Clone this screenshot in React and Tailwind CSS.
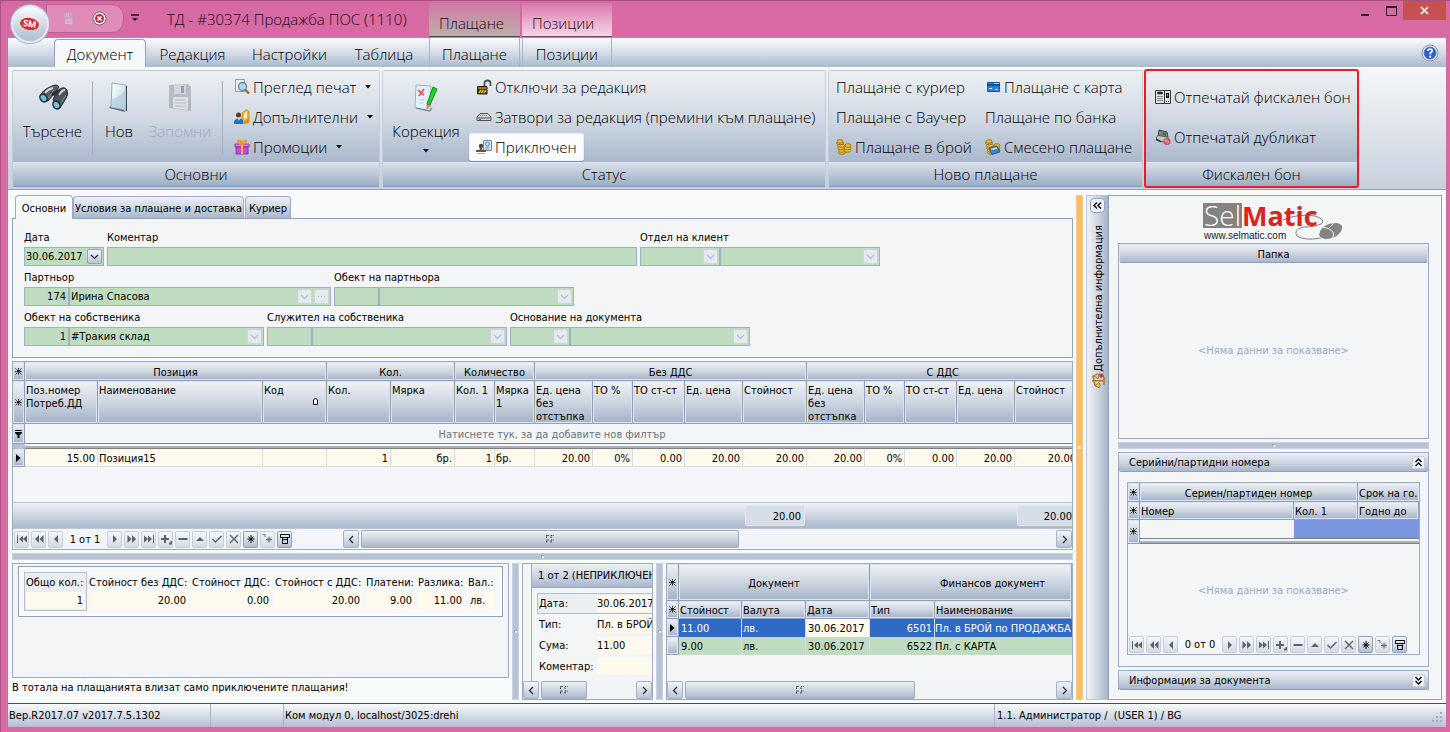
import React, { useId } from "react";

const HEAD =
  "bg-linear-to-b from-[#f1f3f6] via-[#ced6e1] to-[#a4b2c8] border-r border-b border-[#8ea1be] shadow-[inset_0_0_0_1px_#dde3ec] font-normal overflow-hidden";
const BAR = "bg-linear-to-b from-[#eef1f5] via-[#ced6e1] to-[#a9b6cb]";
const LINE = "border-[#9aacc6]";

/* ---------- icons ---------- */
const Svg = ({ size = 16, children, className = "" }) => (
  <svg width={size} height={size} viewBox={`0 0 ${size} ${size}`} className={`shrink-0 ${className}`} aria-hidden="true">
    {children}
  </svg>
);

const Binoculars = () => (
  <Svg size={32}>
    <path d="M3 16 Q5 9 13 6 Q20 2 22 6 L17 13 L11 20 Z" fill="#596169" stroke="#23282c" />
    <path d="M16 19 L20 10 Q27 4 30 9 Q32 14 28 19 L23 27 Z" fill="#4d555c" stroke="#23282c" />
    <path d="M13 11 L24 9 L22 14 L15 15 Z" fill="#2c3236" />
    <path d="M8 12 Q11 8 16 7 M22 14 Q25 9 28 9" stroke="#d2d9de" strokeWidth="1.800" fill="none" />
    <path d="M11 17 L17 9 M24 22 L29 14" stroke="#878f96" />
    <ellipse cx="6.500" cy="17" rx="4" ry="5" transform="rotate(-35 6.500 17)" fill="#23282c" />
    <ellipse cx="6.500" cy="17" rx="2.500" ry="3.500" transform="rotate(-35 6.500 17)" fill="#6cc3e0" />
    <ellipse cx="19.500" cy="24" rx="4" ry="5" transform="rotate(-35 19.500 24)" fill="#23282c" />
    <ellipse cx="19.500" cy="24" rx="2.500" ry="3.500" transform="rotate(-35 19.500 24)" fill="#6cc3e0" />
  </Svg>
);
const NewDoc = () => (
  <Svg size={32}>
    <defs>
      <linearGradient id="nd" x1="0" y1="0" x2="1" y2="1">
        <stop offset="0" stopColor="#fff" />
        <stop offset="1" stopColor="#b9d4e2" />
      </linearGradient>
    </defs>
    <path d="M6 27 L22 31 L20 26 L8 24 Z" fill="#69727b" />
    <path d="M9 2 L23 4 V29 L8 26 Z" fill="url(#nd)" stroke="#8fb0c6" />
    <path d="M9 18 Q17 16 22 9 V28 L9 25 Z" fill="#a8c6d4" opacity=".55" />
    <path d="M23.500 5 V30" stroke="#3d4a55" />
  </Svg>
);
const Floppy = ({ size = 32 }) => (
  <svg width={size} height={size} viewBox="0 0 32 32" className="shrink-0" aria-hidden="true">
    <path d="M5 4 L24 3 L27 6 V30 L5 27 Z" fill="#a9b0ba" opacity=".8" />
    <path d="M10 4 H22 V13 H10 Z" fill="#d3d8df" />
    <path d="M17 5 H20 V12 H17 Z" fill="#9aa2ad" />
    <path d="M9 16 H24 V29 L9 27 Z" fill="#dde1e7" />
    <path d="M11 19 H22 M11 22 H22 M11 25 H22" stroke="#b4bbc6" />
  </svg>
);
const EditDoc = () => (
  <Svg size={32}>
    <path d="M6 4 L21 5 L20 30 L5 27 Z" fill="#e4f1fa" stroke="#8fb9d4" />
    <path d="M6 27 L20 30 L22 27" fill="none" stroke="#5d7382" />
    <path d="M8 9 L14 14 M14 8 L9 15" stroke="#f0555a" strokeWidth="2" />
    <path d="M9 19 H15 M9 22 H14" stroke="#b4cfe0" />
    <path d="M23 6 L27 8 L20 24 L17 23 Z" fill="#21d32b" stroke="#0d8f1a" />
    <path d="M17 23 L20 24 L17 28 Z" fill="#e3a64e" stroke="#8a5a1c" strokeWidth=".6" />
  </Svg>
);
const PreviewIcon = () => (
  <Svg>
    <path d="M1.500 .5 H10.500 V12.500 H1.500 Z" fill="#e5f2fb" stroke="#7ea5c4" />
    <circle cx="8.500" cy="7.500" r="4" fill="#a9dbf5" stroke="#6c7f8e" strokeWidth="1.300" />
    <path d="M11 10.500 L15 14.500" stroke="#9a6b2a" strokeWidth="2.400" />
  </Svg>
);
const ExtraIcon = () => (
  <Svg>
    <path d="M8 4 L13 .5 L15 3 V13 L8 14 Z" fill="#f3b23c" stroke="#b8781a" strokeWidth=".7" />
    <path d="M10 4 L13 2.500 V9 L10 11 Z" fill="#ffe9b5" />
    <circle cx="4.500" cy="6" r="2.500" fill="#5b3f2c" />
    <path d="M0 15 V12 Q4 7 9 11 V15 Z" fill="#2f6fb5" />
    <path d="M4 9 L5 12 L6 9 Z" fill="#fff" />
    <path d="M9 13 L15 9 V14 L10 15 Z" fill="#d48b28" />
  </Svg>
);
const GiftIcon = () => (
  <Svg>
    <path d="M1 5 H15 V8 H1 Z" fill="#e07be8" stroke="#7e2a92" strokeWidth=".8" />
    <path d="M2 8 H14 V15 H2 Z" fill="#c44fd6" stroke="#7e2a92" strokeWidth=".8" />
    <path d="M7 5 H9 V15 H7 Z" fill="#ffb03b" />
    <path d="M8 5 Q3 4 4 1.500 Q7 1 8 5 Q9 1 12 1.500 Q13 4 8 5" fill="none" stroke="#f5941d" strokeWidth="1.600" />
  </Svg>
);
const UnlockIcon = () => (
  <Svg>
    <path d="M8.500 8 V4 Q8.500 1.500 11.500 1.500 Q14.500 1.500 14.500 4 V7" fill="none" stroke="#4e5358" strokeWidth="1.800" />
    <path d="M1.500 7.500 H11 V15 H1.500 Z" fill="#3b3226" stroke="#26221c" />
    <path d="M3 14 L5 11 M5.500 14 L7.500 11 M8 14 L10 11" stroke="#e7b52c" strokeWidth="1.500" />
    <path d="M2 9 H10.500" stroke="#d7a640" strokeWidth="1.200" />
  </Svg>
);
const DeviceIcon = () => (
  <Svg>
    <path d="M4 4.500 H12 L15 8 V11.500 H1 V8 Z" fill="#d4d7db" stroke="#4d5257" strokeLinejoin="round" />
    <path d="M1.500 9 H14.500" stroke="#4d5257" />
    <path d="M4 6.500 H12" stroke="#72787e" strokeDasharray="1 1" />
    <path d="M3 10.500 H5" stroke="#c44" />
  </Svg>
);
const StampIcon = () => (
  <Svg>
    <path d="M7.500 1.500 H15.500 V11.500 H7.500 Z" fill="#dceaf6" stroke="#5f8fb8" />
    <path d="M9 8.500 H14 M9 10 H13" stroke="#8ba8c0" />
    <circle cx="11.500" cy="5" r="2" fill="none" stroke="#4a7eb0" />
    <circle cx="5" cy="7" r="2.200" fill="#4a423c" />
    <path d="M4 8 H6 L6.500 11 H10 V13 H0 V11 H3.500 Z" fill="#6b5446" />
    <path d="M1 14.500 H9" stroke="#c8a68e" />
  </Svg>
);
const CoinsIcon = ({ blue }) => (
  <Svg>
    <g fill="#f0be35" stroke="#8f6508" strokeWidth=".8">
      <ellipse cx="6" cy="13.500" rx="3.500" ry="1.800" />
      <ellipse cx="6" cy="11.500" rx="3.500" ry="1.800" />
      <ellipse cx="5" cy="9" rx="3.500" ry="1.800" />
      <ellipse cx="5" cy="6.500" rx="3.500" ry="1.800" />
      <ellipse cx="4" cy="4" rx="3.500" ry="1.800" />
      <ellipse cx="4" cy="2.500" rx="3" ry="1.800" />
      <ellipse cx="11.500" cy="11.500" rx="3.500" ry="1.800" />
      <ellipse cx="11.500" cy="9" rx="3.500" ry="1.800" />
      <ellipse cx="12" cy="6.500" rx="3" ry="1.800" />
    </g>
    {blue && (
      <g>
        <path d="M4 9 L12 7 L15 13 L7 15.500 Z" fill="#3c83cc" stroke="#1c4f8e" strokeWidth=".8" />
        <path d="M6 10.500 L12 9" stroke="#cfe4f7" strokeWidth="1.500" />
      </g>
    )}
  </Svg>
);
const CardIcon = () => (
  <Svg>
    <path d="M2.500 3.500 H14.500 V12.500 H2.500 Z" fill="#2a7fd4" stroke="#1d5a9c" />
    <path d="M2 6 H15" stroke="#0f4280" strokeWidth="1.500" />
    <path d="M4 9.500 H7 M10 10.500 H13" stroke="#d8ecff" />
    <path d="M9 4.500 H14" stroke="#f3d05a" />
  </Svg>
);
const FiscalIcon = () => (
  <Svg>
    <path d="M.5 1.500 H15.500 V14.500 H.5 Z" fill="#dfe3e0" stroke="#3a3f3c" />
    <path d="M2.500 3 H7.500 V5 H2.500 Z" fill="#173a20" stroke="#222" strokeWidth=".5" />
    <path d="M2.500 7.500 H8 M2.500 9.500 H8 M2.500 11.500 H8" stroke="#333" strokeDasharray="1 1" />
    <path d="M9.500 2 V14" stroke="#333" />
    <path d="M11 4 H14 V9 H11 Z" fill="#111" />
    <path d="M12.500 5 V7.500" stroke="#35d14d" />
    <path d="M11 12.500 H14" stroke="#444" strokeDasharray="1 1" />
  </Svg>
);
const DuplicateIcon = () => (
  <Svg>
    <path d="M4 1 L12 3 L13 8 L3 7 Z" fill="#7d8681" stroke="#3d433f" />
    <path d="M8 3.500 L11 4.500 L11 6.500 L8 6 Z" fill="#1d7a3d" />
    <path d="M1 9 L3 6.500 L13 8 L12 13 L5 12.500 Z" fill="#c6cbc8" stroke="#535a56" />
    <path d="M1 10.500 L6 12.500" stroke="#35393a" strokeWidth="1.500" />
    <circle cx="12" cy="12.500" r="2.700" fill="#fff" stroke="#dd3c48" strokeWidth="1.500" />
    <path d="M10.500 14.500 L14 10.500" stroke="#dd3c48" strokeWidth="1.300" />
  </Svg>
);
const HelpIcon = () => (
  <svg width="18" height="18" viewBox="0 0 18 18" aria-hidden="true">
    <circle cx="9" cy="9" r="8" fill="#e8ecf3" stroke="#8793a8" />
    <circle cx="9" cy="9" r="6" fill="#2f5fcb" stroke="#4a78dd" />
    <path d="M7 7 Q7 5 9 5 Q11.500 5 11 7.300 Q10.500 8.300 9.300 9 V10.500" fill="none" stroke="#fff" strokeWidth="1.700" />
    <circle cx="9.200" cy="12.600" r="1.100" fill="#fff" />
  </svg>
);
const ScaleIcon = () => (
  <Svg>
    <path d="M8 2 V13 M3 5 L13 3 M4 14 H12" stroke="#b07a18" strokeWidth="1.600" fill="none" />
    <path d="M1 9 L3 5 L6 9 Q3.500 11.500 1 9 Z M10 8 L13 3.500 L15 8 Q12.500 10 10 8 Z" fill="#f2c657" stroke="#8f6410" strokeWidth=".8" />
    <path d="M11 10 L15 9 V13 L12 14 Z" fill="#c23a3a" />
  </Svg>
);
const Star = () => (
  <svg width="9" height="9" viewBox="0 0 9 9" className="mx-auto block" aria-hidden="true">
    <path d="M4.500 1 V8 M1 4.500 H8" stroke="#000" strokeDasharray="1.200 .5" />
    <path d="M1.500 1.500 L7.500 7.500 M7.500 1.500 L1.500 7.500" stroke="#000" strokeDasharray="1.500 .5" />
  </svg>
);
const FilterMark = () => (
  <svg width="9" height="10" viewBox="0 0 9 10" className="mx-auto block" aria-hidden="true">
    <path d="M1 1.500 H8" stroke="#000" />
    <path d="M1 3 H8 V4 L6 6 H3 L1 4 Z" fill="#000" />
    <path d="M3.500 5 V9 H5.500 V5 Z" fill="#000" />
  </svg>
);
const RowArrow = () => (
  <svg width="5" height="8" viewBox="0 0 5 8" className="mx-auto block" aria-hidden="true">
    <path d="M0 0 L4.500 4 L0 8 Z" fill="#000" />
  </svg>
);
const Chevron = ({ dir = "down", dim }) => {
  const d = { down: "M2 4 L5.500 7.500 L9 4", left: "M7 2 L3.500 5.500 L7 9", right: "M4 2 L7.500 5.500 L4 9" }[dir];
  return (
    <svg width="11" height="11" viewBox="0 0 11 11" className="mx-auto block" aria-hidden="true">
      <path d={d} fill="none" stroke={dim ? "#b4bdcc" : "#1f2227"} strokeWidth="1.200" />
    </svg>
  );
};
const DoubleChevron = ({ dir }) => {
  const d = {
    up: "M2.500 5 L5.500 2 L8.500 5 M2.500 9 L5.500 6 L8.500 9",
    down: "M2.500 2 L5.500 5 L8.500 2 M2.500 6 L5.500 9 L8.500 6",
    left: "M5 2.500 L2 5.500 L5 8.500 M9 2.500 L6 5.500 L9 8.500",
  }[dir];
  return (
    <svg width="11" height="11" viewBox="0 0 11 11" className="shrink-0" aria-hidden="true">
      <path d={d} fill="none" stroke="#111" strokeWidth="1.500" />
    </svg>
  );
};
const Caret = () => (
  <svg width="6" height="4" viewBox="0 0 6 4" className="block shrink-0" aria-hidden="true">
    <path d="M0 0 H6 L3 3.500 Z" fill="#111" />
  </svg>
);

const NAV_ICONS = {
  first: <path d="M1 2 H2 V10 H1 Z M7 2.500 V9.500 L3 6 Z M11 2.500 V9.500 L7 6 Z" fill="#5f6368" />,
  prevPage: <path d="M6 2 L2 6 L6 10 Z M10.500 2 L6.500 6 L10.500 10 Z" fill="#5f6368" />,
  prev: <path d="M8 2 L4 6 L8 10 Z" fill="#5f6368" />,
  next: <path d="M4 2 L8 6 L4 10 Z" fill="#5f6368" />,
  nextPage: <path d="M1.500 2 L5.500 6 L1.500 10 Z M6 2 L10 6 L6 10 Z" fill="#5f6368" />,
  last: <path d="M1 2.500 L5 6 L1 9.500 Z M5 2.500 L9 6 L5 9.500 Z M10 2 H11 V10 H10 Z" fill="#5f6368" />,
  add: <path d="M5 2 V10 M1 6 H9 M9 10.500 H11.500 V8" stroke="#5f6368" strokeWidth="2" fill="none" />,
  del: <path d="M1.500 6 H10.500" stroke="#5f6368" strokeWidth="2" />,
  edit: <path d="M2 8 L6 4 L10 8 Z" fill="#5f6368" />,
  post: <path d="M1.500 6 L4.500 9 L10.500 3" stroke="#5f6368" strokeWidth="1.500" fill="none" />,
  cancel: <path d="M2 2 L10 10 M10 2 L2 10" stroke="#5f6368" strokeWidth="1.400" />,
  star: <path d="M6 2 V10 M2.500 6 H9.500 M3.500 3.500 L8.500 8.500 M8.500 3.500 L3.500 8.500" stroke="#000" />,
  goto: <path d="M.5 1.500 H3 V4 M7 3.500 V9.500 M4 6.500 H10 M5 4.500 L9 8.500 M9 4.500 L5 8.500" stroke="#5f6368" strokeWidth=".9" fill="none" />,
  filter: <path d="M1.500 1.500 H10.500 V4.500 H1.500 Z M3.500 4.500 V10.500 H8.500 V4.500 M3.500 6.500 H8.500" stroke="#000" fill="none" />,
};
const NavButton = ({ name, label, strong }) => (
  <button
    type="button"
    aria-label={label}
    className={`flex h-[17px] w-[15px] items-center justify-center rounded-xs border bg-linear-to-b from-[#f6f8fa] ${
      strong ? "border-[#8c9fbd] to-[#b3c0d3]" : "border-[#c4cedd] to-[#d4dbe6]"
    }`}
  >
    <svg width="12" height="12" viewBox="0 0 12 12" className="shrink-0" aria-hidden="true">
      {NAV_ICONS[name]}
    </svg>
  </button>
);
const Navigator = ({ text }) => (
  <div className="flex items-center gap-[2px] px-px">
    <NavButton name="first" label="Първи" />
    <NavButton name="prevPage" label="Предишна страница" />
    <NavButton name="prev" label="Предишен" />
    <span className="w-[40px] text-center whitespace-nowrap">{text}</span>
    <NavButton name="next" label="Следващ" />
    <NavButton name="nextPage" label="Следваща страница" />
    <NavButton name="last" label="Последен" />
    <NavButton name="add" label="Добави" />
    <NavButton name="del" label="Изтрий" />
    <NavButton name="edit" label="Редактирай" />
    <NavButton name="post" label="Запиши" />
    <NavButton name="cancel" label="Отказ" />
    <NavButton name="star" label="Отметка" strong />
    <NavButton name="goto" label="Към отметка" />
    <NavButton name="filter" label="Филтър" strong />
  </div>
);

const ScrollBar = ({ thumb, className = "" }) => (
  <div className={`flex h-[18px] items-stretch gap-[2px] bg-[#f1f3f6] ${className}`}>
    <button type="button" aria-label="Наляво" className="w-4 rounded-xs border border-[#a5b3c9] bg-linear-to-b from-[#f4f6f9] to-[#b9c5d7]">
      <Chevron dir="left" />
    </button>
    <div className="flex flex-1">
      <div className={`flex items-center justify-center rounded-xs border border-[#9aabc4] ${BAR} ${thumb}`}>
        <svg width="8" height="8" viewBox="0 0 8 8" aria-hidden="true">
          <path d="M.5 3 V.5 H3 M5 3 V.5 H7.500 M.5 7.500 V5 H3 M5 7.500 V5 H7.500" fill="none" stroke="#1b1f26" strokeDasharray="1.500 .7" />
        </svg>
      </div>
    </div>
    <button type="button" aria-label="Надясно" className="w-4 rounded-xs border border-[#a5b3c9] bg-linear-to-b from-[#f4f6f9] to-[#b9c5d7]">
      <Chevron dir="right" />
    </button>
  </div>
);

/* ---------- ribbon ---------- */
const RibbonGroup = ({ title, className = "", children }) => (
  <section className={`flex h-[117px] shrink-0 flex-col rounded-xs border border-[#c3cddb] border-b-[#8499b8] ${className}`}>
    <div className="flex flex-1 bg-linear-to-b from-[#edf0f3] via-[#d3dae4] to-[#aab8cd] pt-[2px]">{children}</div>
    <h2 className="flex h-[24px] items-center justify-center border-t border-[#dfe5ed] bg-linear-to-b from-[#d9dfe8] to-[#9cadc5] pb-px text-[15px] leading-5">
      {title}
    </h2>
  </section>
);
const BigButton = ({ icon, label, className = "", caret, disabled }) => (
  <button type="button" disabled={disabled} className={`flex h-[86px] shrink-0 flex-col items-center pt-2 disabled:text-[#9aabc5] ${className}`}>
    {icon}
    <span className="mt-2 leading-5">{label}</span>
    {caret && <span className="mt-2"><Caret /></span>}
  </button>
);
const SmallButton = ({ icon, label, caret, active }) => (
  <button
    type="button"
    className={`flex h-7 items-center gap-[3px] self-start rounded-xs border px-[6px] whitespace-nowrap ${
      active ? "border-[#e9edf2] bg-[#fbfcfd] shadow-[0_1px_1px_#7d8ea9]" : "border-transparent"
    }`}
  >
    {icon}
    <span>{label}</span>
    {caret && <span className="ml-[6px]"><Caret /></span>}
  </button>
);
const Separator = () => <div className="mt-2 h-[74px] w-px shrink-0 bg-[#9fb2cb]" />;

/* ---------- form ---------- */
const FieldButton = ({ dim = true, dots }) => (
  <button
    type="button"
    aria-label={dots ? "Още" : "Отвори списък"}
    className={`flex h-[15px] w-[15px] shrink-0 items-center justify-center rounded-xs border ${
      dim ? "border-[#cbd5df] bg-[#e6eaf0]" : "border-[#8fa2be] bg-linear-to-b from-[#f5f7fa] to-[#b9c5d7]"
    }`}
  >
    {dots ? (
      <svg width="9" height="3" viewBox="0 0 9 3" aria-hidden="true">
        <path d="M1 1.500 H8" stroke="#a9b4c6" strokeDasharray="1 2" />
      </svg>
    ) : (
      <Chevron dim={dim} />
    )}
  </button>
);
const Box = ({ id, label, value = "", w, right, button, dots, strong }) => (
  <div className={`flex h-[19px] items-center gap-[2px] border border-[#9db0c4] bg-[#c0dcc0] pr-px ${w}`}>
    <input
      id={id}
      aria-label={label}
      defaultValue={value}
      className={`h-full min-w-0 flex-1 bg-transparent px-px outline-none ${right ? "text-right" : ""}`}
    />
    {button && <FieldButton dim={!strong} />}
    {dots && <FieldButton dots />}
  </div>
);
const Field = ({ label, boxes }) => {
  const id = useId();
  return (
    <div className="flex flex-col">
      <label htmlFor={id} className="h-[19px] leading-5">{label}</label>
      <div className="flex">
        {boxes.map((b, i) => (
          <Box key={i} id={i === 0 ? id : undefined} label={i ? `${label}: име` : undefined} {...b} />
        ))}
      </div>
    </div>
  );
};

/* ---------- positions grid ---------- */
const COLS = [
  ["w-[73px]", "Поз.номер Потреб.ДД", "15.00", true],
  ["w-[165px]", "Наименование", "Позиция15", false],
  ["w-[64px]", "Код", "", false],
  ["w-[64px]", "Кол.", "1", true],
  ["w-[64px]", "Мярка", "бр.", true],
  ["w-[40px]", "Кол. 1", "1", true],
  ["w-[40px]", "Мярка 1", "бр.", false],
  ["w-[58px]", "Ед. цена без отстъпка", "20.00", true],
  ["w-[40px]", "ТО %", "0%", true],
  ["w-[52px]", "ТО ст-ст", "0.00", true],
  ["w-[58px]", "Ед. цена", "20.00", true],
  ["w-[64px]", "Стойност", "20.00", true],
  ["w-[58px]", "Ед. цена без отстъпка", "20.00", true],
  ["w-[40px]", "ТО %", "0%", true],
  ["w-[52px]", "ТО ст-ст", "0.00", true],
  ["w-[58px]", "Ед. цена", "20.00", true],
  ["w-[64px]", "Стойност", "20.00", true],
];
const GROUPS = [["Позиция", 3], ["Кол.", 2], ["Количество", 2], ["Без ДДС", 5], ["С ДДС", 5]];

const PositionsGrid = () => (
  <div className={`flex h-[189px] flex-col overflow-hidden border ${LINE} bg-[#f3f5f8]`}>
    <div className="flex-1 overflow-hidden">
      <table className="w-[1066px] table-fixed border-separate border-spacing-0">
        <colgroup>
          <col className="w-[12px]" />
          {COLS.map((c, i) => <col key={i} className={c[0]} />)}
        </colgroup>
        <thead>
          <tr className="h-[19px]">
            <th className={HEAD}><Star /></th>
            {GROUPS.map(([t, n]) => <th key={t} colSpan={n} className={`${HEAD} pt-[2px]`}>{t}</th>)}
          </tr>
          <tr className="h-[43px]">
            <th className={HEAD}><Star /></th>
            {COLS.map((c, i) => (
              <th key={i} className={`${HEAD} px-px pt-[3px] text-left align-top leading-[13px]`}>
                {c[1]}
                {i === 2 && (
                  <svg width="7" height="9" viewBox="0 0 7 9" className="mr-[6px] ml-auto block" aria-hidden="true">
                    <path d="M1.500 7.500 V3 L3.500 1 L5.500 3 V7.500 Z" fill="#fff" stroke="#111" />
                  </svg>
                )}
              </th>
            ))}
          </tr>
        </thead>
        <tbody>
          <tr className="h-[20px]">
            <td className={HEAD}><FilterMark /></td>
            <td colSpan={17} className="border-b border-[#808080] pt-[2px] text-center text-[#6f7276]">
              Натиснете тук, за да добавите нов филтър
            </td>
          </tr>
          <tr className="h-[5px]">
            <td className="h-[5px] bg-[#b5c1d3]" />
            <td colSpan={17} className="h-[5px] border-b border-[#808080] bg-linear-to-b from-[#f3f5f8] from-40% to-[#a3b2c8] to-50%" />
          </tr>
          <tr className="h-[18px] bg-[#fff9ee]">
            <td className={HEAD}><RowArrow /></td>
            {COLS.map((c, i) => (
              <td key={i} className={`border-r border-b border-[#d5dde8] px-[2px] pt-px whitespace-nowrap ${c[3] ? "text-right" : "pl-px"}`}>
                {c[2]}
              </td>
            ))}
          </tr>
        </tbody>
      </table>
    </div>
    <div className={`flex h-[27px] shrink-0 overflow-hidden border-t border-b border-[#b9c5d6] py-[2px] ${BAR}`}>
      <div className="w-[732px] shrink-0" />
      <div className="w-[60px] shrink-0 rounded-xs border border-[#e3e8ef] bg-[#d6dde7] pr-[3px] text-right leading-[22px]">20.00</div>
      <div className="w-[212px] shrink-0" />
      <div className="w-[60px] shrink-0 rounded-xs border border-[#e3e8ef] bg-[#d6dde7] pr-[4px] text-right leading-[22px]">20.00</div>
    </div>
    <div className="flex h-[20px] shrink-0 items-center">
      <div className="w-[330px] shrink-0"><Navigator text="1 от 1" /></div>
      <ScrollBar thumb="w-[378px]" className="flex-1" />
    </div>
  </div>
);

const HSplit = () => (
  <div className="flex h-[7px] shrink-0 items-center justify-center border border-[#c8d1de] bg-[#b7c3d5]">
    <div className="size-[3px] border-t border-l border-[#8fa0ba] bg-white" />
  </div>
);
const VSplit = () => (
  <div className="flex w-[7px] shrink-0 items-center justify-center border border-[#c8d1de] bg-[#b7c3d5]">
    <div className="size-[3px] border-t border-l border-[#8fa0ba] bg-white" />
  </div>
);

const SUMMARY = [
  ["w-[63px]", "Общо кол.:", "1"],
  ["w-[103px]", "Стойност без ДДС:", "20.00"],
  ["w-[83px]", "Стойност ДДС:", "0.00"],
  ["w-[91px]", "Стойност с ДДС:", "20.00"],
  ["w-[52px]", "Платени:", "9.00"],
  ["w-[50px]", "Разлика:", "11.00"],
  ["w-[30px]", "Вал.:", "лв."],
];

const Totals = () => (
  <div className="flex min-w-0 flex-1 flex-col">
    <div className={`flex-1 border ${LINE} bg-[#f3f5f7] p-[5px] pt-[2px]`}>
      <div className="flex w-[485px] border border-[#8ea1be] bg-[#f6f8fa] p-[5px] shadow-[inset_0_0_0_2px_#fff]">
        {SUMMARY.map(([w, l, v], i) => (
          <div key={l} className={`shrink-0 border p-px whitespace-nowrap ${w} ${i ? "border-transparent" : "border-[#b3c0d3] bg-[#ebeef2]"}`}>
            <div className="h-[18px] leading-[18px]">{l}</div>
            <div className={`h-[17px] bg-[#fff9ee] px-[2px] leading-[17px] ${v === "лв." ? "" : "text-right"}`}>{v}</div>
          </div>
        ))}
      </div>
    </div>
    <p className="h-[22px] leading-5">В тотала на плащанията влизат само приключените плащания!</p>
  </div>
);

const PaymentCard = () => (
  <div className={`flex w-[131px] shrink-0 flex-col overflow-hidden border ${LINE} bg-[#f3f5f7]`}>
    <div className="ml-2 flex-1 overflow-hidden border-l border-[#9aacc6] whitespace-nowrap">
      <div className={`h-[24px] border-b border-[#9aacc6] pl-[6px] leading-[23px] ${BAR}`}>1 от 2 (НЕПРИКЛЮЧЕН)</div>
      <dl className="mt-[5px] flex flex-col pl-[5px]">
        {[["Дата:", "30.06.2017"], ["Тип:", "Пл. в БРОЙ"], ["Сума:", "11.00"], ["Коментар:", ""]].map(([k, v], i) => (
          <div key={k} className={`flex h-[21px] w-[160px] items-center border pl-px ${i ? "border-transparent" : "border-[#b3c0d3] bg-[#eceff2]"}`}>
            <dt className="w-[58px]">{k}</dt>
            <dd className="h-[17px] flex-1 bg-[#fff9ee] leading-[17px]">{v}</dd>
          </div>
        ))}
      </dl>
    </div>
    <ScrollBar thumb="w-[46px]" />
  </div>
);

const PaymentsTable = () => (
  <div className={`flex w-[407px] shrink-0 flex-col overflow-hidden border ${LINE} bg-[#f3f5f7]`}>
    <div className="flex-1 overflow-hidden">
      <table className="w-full table-fixed border-separate border-spacing-0 whitespace-nowrap">
        <colgroup>
          <col className="w-[12px]" />
          <col className="w-[63px]" />
          <col className="w-[64px]" />
          <col className="w-[64px]" />
          <col className="w-[65px]" />
          <col />
        </colgroup>
        <thead>
          <tr className="h-[37px]">
            <th className={HEAD}><Star /></th>
            <th colSpan={3} className={`${HEAD} pt-[2px]`}>Документ</th>
            <th colSpan={2} className={`${HEAD} pt-[2px] pl-11`}>Финансов документ</th>
          </tr>
          <tr className="h-[18px]">
            <th className={HEAD}><Star /></th>
            {["Стойност", "Валута", "Дата", "Тип", "Наименование"].map((t) => (
              <th key={t} className={`${HEAD} px-px pt-px text-left`}>{t}</th>
            ))}
          </tr>
        </thead>
        <tbody>
          {[
            ["11.00", "6501", "Пл. в БРОЙ по ПРОДАЖБА", true],
            ["9.00", "6522", "Пл. с КАРТА", false],
          ].map(([sum, type, name, sel]) => (
            <tr key={type} className={`h-[18px] ${sel ? "bg-[#316ac5] text-white" : "bg-[#c0dcc0]"}`}>
              <td className={HEAD}>{sel && <RowArrow />}</td>
              <td className="border-r border-[#d5dde8] px-[2px]">{sum}</td>
              <td className="border-r border-[#d5dde8] px-px">лв.</td>
              <td className={`border-r border-[#d5dde8] px-[2px] ${sel ? "bg-[#fff9ee] text-black" : ""}`}>30.06.2017</td>
              <td className="border-r border-[#d5dde8] px-[2px] text-right">{type}</td>
              <td>{name}</td>
            </tr>
          ))}
        </tbody>
      </table>
    </div>
    <ScrollBar thumb="w-[230px]" />
  </div>
);

/* ---------- side panel ---------- */
const Logo = () => (
  <svg width="140" height="38" viewBox="0 0 140 38" className="block" role="img" aria-label="SelMatic www.selmatic.com">
    <path d="M80 17 Q96 10 112 13 Q124 17 118 21 Q112 24 100 24 Q90 27 94 33 Q102 38 118 35" fill="none" stroke="#85827f" />
    <path d="M0 0 H39 V25 H0 Z" fill="#85827f" />
    <text x="1" y="23" fontSize="28" fontFamily="Open Sans, Noto Sans, sans-serif" fontWeight="300" fill="#fff">Sel</text>
    <text x="39" y="23" fontSize="27" fontFamily="Open Sans, Noto Sans, sans-serif" fontWeight="700" fill="#dc241f">Matic</text>
    <text x="1" y="36" fontSize="10" fontFamily="Liberation Sans, sans-serif" fill="#1d1d1b">www.selmatic.com</text>
    <path d="M116 32 Q117 24 126 21 Q136 18 139 23 Q140 29 132 34 Q120 39 116 32 Z" fill="#85827f" />
    <path d="M120 24 Q127 25 130 29 Q132 32 129 35 M126 25 L131 20" fill="none" stroke="#f3f5f7" />
  </svg>
);
const Collapse = ({ title, dir, children }) => (
  <section className={`border ${LINE} ${children ? "" : "border-b-0"} bg-[#f3f5f7]`}>
    <div className={`flex h-[19px] items-center justify-between rounded-xs border-b border-[#8ea1be] pr-[3px] pl-[10px] ${BAR}`}>
      <h3>{title}</h3>
      <button
        type="button"
        aria-label={title}
        className="flex size-[13px] items-center justify-center rounded-xs border border-[#c5cfdd] bg-[#eef1f5]"
      >
        <DoubleChevron dir={dir} />
      </button>
    </div>
    {children}
  </section>
);
const Empty = () => <div className="flex flex-1 items-center justify-center text-[#97a9c8]">&lt;Няма данни за показване&gt;</div>;

const SidePanel = () => (
  <aside className="flex shrink-0">
    <div className="flex w-[22px] flex-col items-center border border-r-0 border-[#b9c5d6] bg-linear-to-r from-[#f1f4f7] via-[#cfd7e2] to-[#a6b4ca] pt-[2px]">
      <button
        type="button"
        aria-label="Скрий"
        className="flex size-[15px] items-center justify-center rounded-sm border border-[#8fa2be] bg-[#eef1f5]"
      >
        <DoubleChevron dir="left" />
      </button>
      <div className="mt-3 flex rotate-180 items-center gap-px [writing-mode:vertical-rl]">
        <span className="rotate-90"><ScaleIcon /></span>
        <span>Допълнителна информация</span>
      </div>
    </div>
    <div className="flex w-[334px] flex-col border border-[#8ea1be] bg-[#f3f5f7] px-[9px] pt-[7px]">
      <div className="flex justify-center pr-1 pb-[2px]"><Logo /></div>
      <div className={`flex h-[196px] w-[311px] flex-col border ${LINE}`}>
        <div className={`flex h-[19px] items-center justify-center rounded-xs border border-[#dfe5ed] border-b-[#8ea1be] pt-[2px] ${BAR}`}>Папка</div>
        <div className="flex flex-1"><Empty /></div>
      </div>
      <div className="mt-[3px] flex w-[311px] flex-col">
        <HSplit />
        <div className="mt-[3px]" />
        <Collapse title="Серийни/партидни номера" dir="up">
          <div className="p-2 pt-[10px]">
            <div className={`flex h-[173px] flex-col overflow-hidden border ${LINE}`}>
              <table className="w-full table-fixed border-separate border-spacing-0 whitespace-nowrap">
                <colgroup>
                  <col className="w-[12px]" />
                  <col className="w-[154px]" />
                  <col className="w-[64px]" />
                  <col />
                </colgroup>
                <thead>
                  <tr className="h-[19px]">
                    <th className={HEAD}><Star /></th>
                    <th colSpan={2} className={`${HEAD} pt-[2px]`}>Сериен/партиден номер</th>
                    <th className={`${HEAD} border-r-0 pt-[2px] pl-px text-left`}>Срок на го.</th>
                  </tr>
                  <tr className="h-[18px]">
                    <th className={HEAD}><Star /></th>
                    {["Номер", "Кол. 1", "Годно до"].map((t) => (
                      <th key={t} className={`${HEAD} px-px pt-[2px] text-left`}>{t}</th>
                    ))}
                  </tr>
                </thead>
                <tbody>
                  <tr className="h-[19px]">
                    <td rowSpan={2} className={HEAD}><Star /></td>
                    <td className="border-b border-[#808080]" />
                    <td colSpan={2} className="border-b border-[#808080] bg-[#7b96df]" />
                  </tr>
                  <tr className="h-[5px]">
                    <td colSpan={3} className="h-[5px] border-b border-[#808080] bg-linear-to-b from-[#f3f5f8] from-40% to-[#a3b2c8] to-50%" />
                  </tr>
                </tbody>
              </table>
              <Empty />
              <div className="pb-px"><Navigator text="0 от 0" /></div>
            </div>
            <div className="h-[3px]" />
          </div>
        </Collapse>
        <div className="mt-[3px]" />
        <Collapse title="Информация за документа" dir="down" />
      </div>
    </div>
  </aside>
);

/* ---------- window ---------- */
const TABS = [["Редакция", "w-[93px]"], ["Настройки", "w-[101px]"], ["Таблица", "w-[88px]"]];

export default function App() {
  return (
    <div className="flex min-h-screen flex-col overflow-hidden border-t border-l border-[#a5527f] bg-[#d769a3] pr-1 pb-[5px] pl-[7px] font-['DejaVu_Sans_Condensed','Noto_Sans',sans-serif] text-[11px] leading-[13px] text-black">
      <header className="relative flex h-[36px] shrink-0 font-['Open_Sans','Noto_Sans',sans-serif] text-[15px] font-[350]">
        <div className="absolute top-[4px] left-[3px] z-10 flex size-[38px] items-center justify-center rounded-full border-2 border-[#e4eaf1] bg-linear-to-b from-[#fafbfc] to-[#adbcd1] shadow-[0_0_0_1px_#9fb0c8]">
          <span className="rotate-[8deg] rounded-[50%] bg-[#dc2b25] px-[3px] py-px text-[9px] leading-[10px] font-bold text-white">SM</span>
        </div>
        <div className="mt-[3px] ml-[38px] flex h-[29px] w-[78px] items-center gap-4 rounded-r-xl border border-[#b9608f] bg-[#e08bb8] pl-[14px]">
          <button type="button" aria-label="Запис" className="opacity-50"><Floppy size={15} /></button>
          <button type="button" aria-label="Затвори документа">
            <svg width="15" height="15" viewBox="0 0 15 15" aria-hidden="true">
              <circle cx="7.500" cy="7.500" r="6.500" fill="#f4f4f4" stroke="#6b6b6b" />
              <circle cx="7.500" cy="7.500" r="4.500" fill="#b8303c" />
              <path d="M5.500 5.500 L9.500 9.500 M9.500 5.500 L5.500 9.500" stroke="#fff" strokeWidth="1.700" />
            </svg>
          </button>
        </div>
        <button type="button" aria-label="Настройка на лентата" className="mt-[13px] ml-[7px] h-2">
          <svg width="8" height="8" viewBox="0 0 8 8" aria-hidden="true">
            <path d="M0 1 H8" stroke="#111" strokeWidth="1.500" />
            <path d="M1 4 H7 L4 7 Z" fill="#111" />
          </svg>
        </button>
        <h1 className="ml-7 w-[262px] pt-2 leading-5 whitespace-nowrap text-[#1d0815]">ТД - #30374 Продажба ПОС (1110)</h1>
        <div className="mt-[2px] w-[91px] border-b border-[#4d4a47] bg-linear-to-b from-[#d079a5] to-[#b8afa7] pt-[10px] pl-[10px] leading-5 text-[#1d0815]">Плащане</div>
        <div className="mt-[2px] ml-[2px] w-[90px] border-b border-[#7c4462] bg-linear-to-b from-[#da78ac] to-[#f3d5e5] pt-[10px] pl-[10px] leading-5 text-[#1d0815]">Позиции</div>
        <div className="flex flex-1 justify-end">
          <button type="button" aria-label="Минимизирай" className="flex h-5 w-7 items-center justify-center">
            <svg width="8" height="9" viewBox="0 0 8 9" aria-hidden="true"><path d="M0 8 H8" stroke="#222" strokeWidth="2" /></svg>
          </button>
          <button type="button" aria-label="Увеличи" className="flex h-5 w-6 items-center justify-center">
            <svg width="11" height="10" viewBox="0 0 11 10" aria-hidden="true"><path d="M.5 1 H10.500 V9.500 H.5 Z" fill="none" stroke="#222" /><path d="M0 1 H11" stroke="#222" strokeWidth="2" /></svg>
          </button>
          <button type="button" aria-label="Затвори" className="flex h-[19px] w-[43px] items-center justify-center bg-[#c75050]">
            <svg width="9" height="9" viewBox="0 0 9 9" aria-hidden="true"><path d="M1 1 L8 8 M8 1 L1 8" stroke="#fff" strokeWidth="1.700" /></svg>
          </button>
        </div>
      </header>

      <nav className="flex h-[30px] shrink-0 items-stretch border-t border-[#8a9bb5] bg-linear-to-b from-[#fbfcfd] via-[#d5dce6] to-[#aab9cf] font-['Open_Sans','Noto_Sans',sans-serif] text-[15px] leading-8 font-[350]">
        <a href="#document" className="mt-px ml-[46px] w-[92px] rounded-t-sm border border-b-0 border-[#8fa3c0] bg-[#f6f8fa] text-center leading-7">Документ</a>
        {TABS.map(([t, w]) => <a key={t} href="#tab" className={`text-center ${w}`}>{t}</a>)}
        <a href="#payment" className="ml-[1px] w-[91px] border-x border-[#a3b4cc] text-center">Плащане</a>
        <a href="#positions" className="ml-[2px] w-[90px] border-x border-[#a3b4cc] text-center">Позиции</a>
        <button type="button" aria-label="Помощ" className="mr-[7px] ml-auto"><HelpIcon /></button>
      </nav>

      <div className="flex h-[123px] shrink-0 gap-[2px] border-t border-b border-t-white border-b-[#8fa2be] bg-linear-to-b from-[#f5f7f9] to-[#c9d0dc] pt-[2px] pl-1 font-['Open_Sans','Noto_Sans',sans-serif] text-[15px] font-[350]">
        <RibbonGroup title="Основни" className="w-[368px]">
          <BigButton icon={<Binoculars />} label="Търсене" className="w-[79px]" />
          <Separator />
          <BigButton icon={<NewDoc />} label="Нов" className="w-[52px]" />
          <BigButton icon={<Floppy />} label="Запомни" className="w-[70px]" disabled />
          <div className="ml-[7px]"><Separator /></div>
          <div className="ml-1 flex flex-col gap-[2px]">
            <SmallButton icon={<PreviewIcon />} label="Преглед печат" caret />
            <SmallButton icon={<ExtraIcon />} label="Допълнителни" caret />
            <SmallButton icon={<GiftIcon />} label="Промоции" caret />
          </div>
        </RibbonGroup>
        <RibbonGroup title="Статус" className="w-[444px]">
          <BigButton icon={<EditDoc />} label="Корекция" className="w-[86px]" caret />
          <div className="flex flex-col gap-[2px]">
            <SmallButton icon={<UnlockIcon />} label="Отключи за редакция" />
            <SmallButton icon={<DeviceIcon />} label="Затвори за редакция (премини към плащане)" />
            <SmallButton icon={<StampIcon />} label="Приключен" active />
          </div>
        </RibbonGroup>
        <RibbonGroup title="Ново плащане" className="w-[315px]">
          <div className="flex w-[149px] shrink-0 flex-col gap-[2px]">
            <SmallButton label="Плащане с куриер" />
            <SmallButton label="Плащане с Ваучер" />
            <SmallButton icon={<CoinsIcon />} label="Плащане в брой" />
          </div>
          <div className="flex flex-col gap-[2px]">
            <SmallButton icon={<CardIcon />} label="Плащане с карта" />
            <SmallButton label="Плащане по банка" />
            <SmallButton icon={<CoinsIcon blue />} label="Смесено плащане" />
          </div>
        </RibbonGroup>
        <RibbonGroup title="Фискален бон" className="w-[213px] outline-2 -outline-offset-1 outline-[#ed1c24]">
          <div className="flex flex-col gap-3 pt-[10px] pl-[2px]">
            <SmallButton icon={<FiscalIcon />} label="Отпечатай фискален бон" />
            <SmallButton icon={<DuplicateIcon />} label="Отпечатай дубликат" />
          </div>
        </RibbonGroup>
      </div>

      <main className="flex flex-1 gap-[3px] bg-[#f9fafb] pt-[5px] pr-1 pb-[3px] pl-1">
        <div className="flex min-w-0 flex-1 flex-col">
          <div className="flex h-[23px] items-end pl-[3px]">
            <button type="button" className="relative -mb-px h-[24px] w-[58px] rounded-t-sm border border-b-0 border-[#9aacc6] bg-[#f7f8fa] pt-[2px]">Основни</button>
            <button type="button" className={`h-[22px] w-[171px] rounded-t-sm border border-b-0 border-[#9aacc6] pt-[2px] whitespace-nowrap ${BAR}`}>Условия за плащане и доставка</button>
            <button type="button" className={`ml-px h-[22px] w-[46px] rounded-t-sm border border-b-0 border-[#9aacc6] pt-[2px] ${BAR}`}>Куриер</button>
          </div>
          <form className="flex h-[140px] flex-col gap-[2px] border border-[#8ea1be] bg-[#f3f5f7] pt-[9px] pl-[11px]">
            <div className="flex gap-[3px]">
              <Field label="Дата" boxes={[{ w: "w-[80px]", value: "30.06.2017", button: true, strong: true }]} />
              <Field label="Коментар" boxes={[{ w: "w-[530px]" }]} />
              <Field label="Отдел на клиент" boxes={[{ w: "w-[80px]", button: true }, { w: "w-[160px]", button: true }]} />
            </div>
            <div className="flex gap-[3px]">
              <Field label="Партньор" boxes={[{ w: "w-[45px]", value: "174", right: true }, { w: "w-[262px]", value: "Ирина Спасова", button: true, dots: true }]} />
              <Field label="Обект на партньора" boxes={[{ w: "w-[45px]" }, { w: "w-[195px]", button: true }]} />
            </div>
            <div className="flex gap-[3px]">
              <Field label="Обект на собственика" boxes={[{ w: "w-[45px]", value: "1", right: true }, { w: "w-[195px]", value: "#Тракия склад", button: true }]} />
              <Field label="Служител на собственика" boxes={[{ w: "w-[45px]" }, { w: "w-[195px]", button: true }]} />
              <Field label="Основание на документа" boxes={[{ w: "w-[60px]", button: true }, { w: "w-[180px]", button: true }]} />
            </div>
          </form>
          <div className="mt-[3px]"><PositionsGrid /></div>
          <div className="mt-[3px] mb-[3px]"><HSplit /></div>
          <div className="flex flex-1 items-stretch gap-[3px]">
            <Totals />
            <VSplit />
            <PaymentCard />
            <VSplit />
            <PaymentsTable />
          </div>
        </div>
        <div className="flex w-[7px] shrink-0 items-center justify-center border border-[#f3c98a] bg-[#fdbd62]">
          <div className="size-[3px] bg-[#fff3df]" />
        </div>
        <SidePanel />
      </main>

      <footer className="flex h-[24px] shrink-0 items-stretch border-t border-[#34507f] bg-linear-to-b from-[#fafbfc] to-[#b3bfd1] leading-6">
        <div className="w-[203px] border-r border-[#a3b4cc] pl-px">Вер.R2017.07 v2017.7.5.1302</div>
        <div className="w-[73px] border-r border-[#a3b4cc]" />
        <div className="flex-1 pl-px">Ком модул 0, localhost/3025:drehi</div>
        <div className="flex w-[452px] justify-between border-l border-[#a3b4cc] pl-[2px]">
          <span className="whitespace-pre">1.1. Администратор /  (USER 1) / BG</span>
          <svg width="11" height="11" viewBox="0 0 11 11" className="mt-2 mr-[3px]" aria-hidden="true">
            <path d="M8 0 H10 V2 H8 Z M8 4 H10 V6 H8 Z M4 4 H6 V6 H4 Z M8 8 H10 V10 H8 Z M4 8 H6 V10 H4 Z M0 8 H2 V10 H0 Z" fill="#9eaec6" />
          </svg>
        </div>
      </footer>
    </div>
  );
}
